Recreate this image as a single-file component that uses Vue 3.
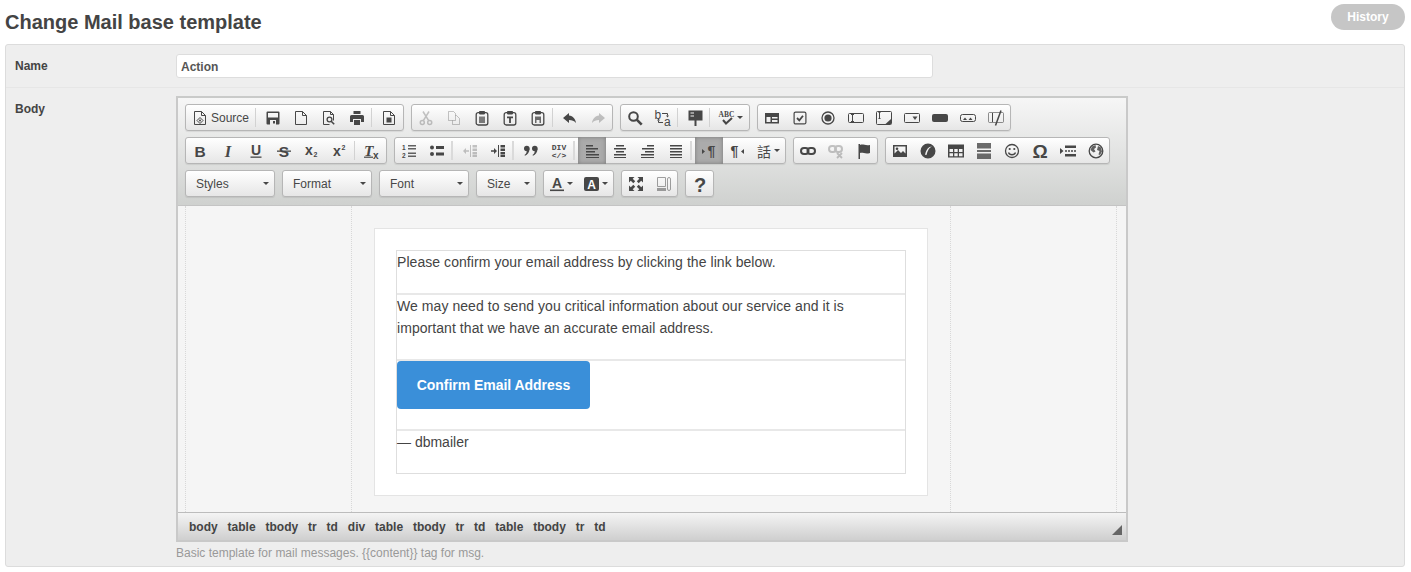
<template>
  <div class="page">
    <div class="top">
      <h1>Change Mail base template</h1>
      <a class="history">History</a>
    </div>

    <div class="panel">
      <div class="row name-row">
        <label>Name</label>
        <input class="name-input" value="Action" />
      </div>

      <div class="row body-row">
        <label>Body</label>
        <div>
          <div class="editor">
            <div class="toolbar">
              <div v-for="(row, r) in toolbar" :key="r" class="tb-row">
                <div v-for="(group, g) in row" :key="g" :class="group.combo ? 'combo' : 'group'" :style="group.combo ? { width: group.combo + 'px' } : null">
                  <template v-if="group.combo">
                    <span>{{ group.label }}</span>
                    <i class="caret"></i>
                  </template>
                  <template v-else v-for="(b, k) in group" :key="k">
                    <span v-if="b.sep" class="sep" :class="{ wide: b.wide }"></span>
                    <span v-else class="btn" :class="{ on: b.on, off: b.off, half: b.half }" :style="b.w ? { width: b.w + 'px' } : null">
                      <svg class="ico" viewBox="0 0 16 16" width="16" height="16" v-html="icons[b.i]"></svg>
                      <span v-if="b.text" class="btn-text">{{ b.text }}</span>
                      <i v-if="b.caret" class="caret small"></i>
                    </span>
                  </template>
                </div>
              </div>
            </div>

            <div class="content">
              <div class="side left"></div>
              <div class="mid">
                <div class="card">
                  <div class="mail">
                    <div class="cell c1">Please confirm your email address by clicking the link below.</div>
                    <div class="cell c2">We may need to send you critical information about our service and it is important that we have an accurate email address.</div>
                    <div class="cell c3"><a class="confirm">Confirm Email Address</a></div>
                    <div class="cell c4">— dbmailer</div>
                  </div>
                </div>
              </div>
              <div class="side right"></div>
            </div>

            <div class="status">
              <span v-for="(p, i) in path" :key="i">{{ p }}</span>
              <i class="resizer"></i>
            </div>
          </div>
          <p class="hint" v-pre>Basic template for mail messages. {{content}} tag for msg.</p>
        </div>
      </div>
    </div>
  </div>
</template>

<script setup>
const path = ['body', 'table', 'tbody', 'tr', 'td', 'div', 'table', 'tbody', 'tr', 'td', 'table', 'tbody', 'tr', 'td']

const sep = { sep: true }
const wsep = { sep: true, wide: true }

const toolbar = [
  [
    [{ i: 'source', text: 'Source', w: 69 }, sep, { i: 'save' }, { i: 'page' }, { i: 'preview' }, { i: 'print' }, sep, { i: 'templates' }],
    [{ i: 'cut', off: true }, { i: 'copy', off: true }, { i: 'paste' }, { i: 'pasteText' }, { i: 'pasteWord' }, sep, { i: 'undo' }, { i: 'redo', off: true }],
    [{ i: 'find' }, { i: 'replace' }, sep, { i: 'blocks' }, sep, { i: 'spell', w: 36, caret: true }],
    [{ i: 'form' }, { i: 'checkbox' }, { i: 'radio' }, { i: 'textfield' }, { i: 'textarea' }, { i: 'select' }, { i: 'button' }, { i: 'imagebutton' }, { i: 'hidden' }]
  ],
  [
    [{ i: 'bold' }, { i: 'italic' }, { i: 'underline' }, { i: 'strike' }, { i: 'sub' }, { i: 'sup' }, sep, { i: 'clear' }],
    [{ i: 'ol' }, { i: 'ul' }, wsep, { i: 'outdent', off: true }, { i: 'indent' }, wsep, { i: 'quote' }, { i: 'div' }, wsep,
      { i: 'left', on: true }, { i: 'center' }, { i: 'right' }, { i: 'justify' }, wsep, { i: 'ltr', on: true }, { i: 'rtl' }, { i: 'lang', w: 34, caret: true }],
    [{ i: 'link' }, { i: 'unlink', off: true }, { i: 'flag', w: 27 }],
    [{ i: 'image' }, { i: 'flash' }, { i: 'table' }, { i: 'hr' }, { i: 'smiley' }, { i: 'omega' }, { i: 'pagebreak' }, { i: 'globe', w: 27 }]
  ],
  [
    { combo: 90, label: 'Styles' },
    { combo: 90, label: 'Format' },
    { combo: 90, label: 'Font' },
    { combo: 60, label: 'Size' },
    [{ i: 'textcolor', w: 34, caret: true }, { i: 'bgcolor', w: 35, caret: true }],
    [{ i: 'maximize' }, { i: 'showblocks', half: true, w: 27 }],
    [{ i: 'help', w: 27 }]
  ]
]

const line = 'fill="none" stroke="currentColor"'
const doc = `<path ${line} d="M2.500 1.500h7l4 4v9h-11zM9.500 1.500v4h4"/>`
const clip = `<rect ${line} stroke-width="1.300" x="2.200" y="2.700" width="11.600" height="12.300" rx="2"/><rect x="5" y="1" width="6" height="3.400" rx=".8"/>`
const sans = 'font-family="Liberation Sans, sans-serif"'

const icons = {
  source: `${doc}<path ${line} d="M8 7.500l3 3-3 3-3-3z"/><circle cx="8" cy="10.500" r="1"/>`,
  save: `<path fill-rule="evenodd" d="M1.500 2.500a1 1 0 0 1 1-1h11a1 1 0 0 1 1 1v11a1 1 0 0 1-1 1h-11a1 1 0 0 1-1-1zM3 3v4.500h10V3zM5 10v4.500h6V10z"/><rect x="8" y="11" width="2" height="2.500"/>`,
  page: doc,
  preview: `<path ${line} d="M2.500 1.500h7l3 3v6M9.500 1.500v3h3M2.500 1.500v13h6"/><circle ${line} stroke-width="1.300" cx="8.500" cy="9.500" r="2.400"/><path ${line} stroke-width="1.600" d="M10.200 11.200l3 3"/>`,
  print: `<path d="M4.500 1h7v3h-7zM2.500 5h11A1.500 1.500 0 0 1 15 6.500V12h-3V9H4v3H1V6.500A1.500 1.500 0 0 1 2.500 5z"/><path d="M5 10h6v5H5z"/>`,
  templates: `${doc}<rect x="5.500" y="7.500" width="5" height="5"/>`,
  cut: `<circle ${line} stroke-width="1.500" cx="4.300" cy="12.500" r="2"/><circle ${line} stroke-width="1.500" cx="11.700" cy="12.500" r="2"/><path ${line} stroke-width="1.500" d="M5.300 10.700L11 1.500M10.700 10.700L5 1.500"/>`,
  copy: `<path ${line} d="M2.500 1.500h5l2 2v7h-7zM9.500 5.500h1l3 3v6h-7v-4"/>`,
  paste: `${clip}<rect x="5" y="6.500" width="6" height="6.500" opacity=".7"/>`,
  pasteText: `${clip}<path d="M5 6.500h6v1.800H8.900V13H7.100V8.300H5z"/>`,
  pasteWord: `${clip}<path fill-rule="evenodd" d="M5 6.500h6v6.500H5zM6.500 10v3h3v-3z" opacity=".8"/>`,
  undo: `<path d="M7 3 1 8l6 5v-3c3 0 5 .7 7 3-.5-4-3-7-7-7.500z"/>`,
  redo: `<path d="M9 3l6 5-6 5v-3c-3 0-5 .7-7 3 .5-4 3-7 7-7.500z"/>`,
  find: `<circle ${line} stroke-width="2" cx="6.500" cy="6.500" r="4.300"/><path ${line} stroke-width="2.600" d="M9.700 9.700l5 5"/>`,
  replace: `<text x="-.5" y="9" font-size="12" ${sans}>b</text><text x="9" y="15.500" font-size="12" ${sans}>a</text><path ${line} d="M7 3.500h5.500v2M8 12.500H3.500v-2"/><path d="M11 5.500h3l-1.500 2zM2 10.500h3l-1.500-2z"/>`,
  blocks: `<path fill-rule="evenodd" d="M1.500 .5h14v10H9.500V16H7.500v-5.500h-6zM3.500 2.500v1h3.500v-1zM3.500 5.500v1h3.500v-1z"/>`,
  spell: `<text x="-.5" y="7" font-size="7.500" font-weight="bold" font-family="Liberation Serif, serif">ABC</text><path ${line} stroke-width="2" d="M4 10l3 3.500L13 8"/>`,
  form: `<path fill-rule="evenodd" d="M1 3h14v10.500H1zM2.500 7v5h4V7zM8 7v1.500h5.500V7zM8 10v2h5.500v-2z"/>`,
  checkbox: `<rect ${line} stroke-width="1.200" x="2.100" y="2.100" width="11.800" height="11.800" rx="1.500"/><path ${line} stroke-width="1.800" d="M5 8l2.300 2.300L11 5.700"/>`,
  radio: `<circle ${line} stroke-width="1.300" cx="8" cy="8" r="6"/><circle cx="8" cy="8" r="3.600"/>`,
  textfield: `<rect ${line} x=".5" y="3.500" width="15" height="9" rx="1"/><path ${line} d="M4.500 4v8M3 4.500h3M3 11.500h3"/>`,
  textarea: `<rect ${line} x=".5" y="1.500" width="15" height="13" rx="1"/><path ${line} d="M3.500 2v7M2.500 2.500h2M2.500 8.500h2"/><path d="M15 9v5H9.500z"/>`,
  select: `<rect ${line} x=".5" y="3.500" width="15" height="9" rx="1"/><path d="M8.500 6.500h5L11 10z"/>`,
  button: `<rect x="0" y="4" width="16" height="8" rx="2"/>`,
  imagebutton: `<rect ${line} x=".5" y="4.500" width="15" height="7" rx="2"/><path d="M3 10l2-2.500L7 10zM8.500 10l2-2.500 2 2.500z"/>`,
  hidden: `<rect ${line} opacity=".6" x=".5" y="2.500" width="15" height="10" rx="1"/><path ${line} d="M4.500 3v9"/><path ${line} stroke-width="1.500" d="M13 .5L7.500 15.500"/>`,
  bold: `<text x="8" y="13.500" text-anchor="middle" font-size="15.500" font-weight="bold" ${sans}>B</text>`,
  italic: `<text x="8" y="13.500" text-anchor="middle" font-size="16.500" font-weight="bold" font-style="italic" font-family="Liberation Serif, serif">I</text>`,
  underline: `<text x="8" y="12" text-anchor="middle" font-size="14" font-weight="bold" ${sans}>U</text><rect x="2.500" y="13.500" width="11" height="1.300"/>`,
  strike: `<text x="8" y="13.500" text-anchor="middle" font-size="15.500" font-weight="bold" ${sans}>S</text><rect x="1" y="7.500" width="14" height="1.300"/>`,
  sub: `<text x="1" y="11.500" font-size="14" font-weight="bold" ${sans}>x</text><text x="9.500" y="14" font-size="7" font-weight="bold" ${sans}>2</text>`,
  sup: `<text x="1" y="12.500" font-size="14" font-weight="bold" ${sans}>x</text><text x="9.500" y="6.500" font-size="7" font-weight="bold" ${sans}>2</text>`,
  clear: `<text x="0" y="12.500" font-size="15.500" font-weight="bold" font-style="italic" font-family="Liberation Serif, serif">T</text><rect x="0" y="13.600" width="9" height="1.200"/><text x="9" y="15.500" font-size="10" font-weight="bold" ${sans}>x</text>`,
  ol: `<text x="1" y="7" font-size="6.500" font-weight="bold" ${sans}>1</text><text x="1" y="14.500" font-size="6.500" font-weight="bold" ${sans}>2</text><path opacity=".85" d="M7 2h8v1.500H7zM7 5h8v1.500H7zM7 9.500h8V11H7zM7 12.500h8V14H7z"/>`,
  ul: `<circle cx="3" cy="4.500" r="2"/><circle cx="3" cy="11" r="2"/><path d="M7 3h8v3H7zM7 9.500h8v3H7z"/>`,
  outdent: `<path d="M8 2h1v12H8zM10.500 2H15v2.400h-4.500zM10.500 5.500H15v2.400h-4.500zM10.500 9H15v2.400h-4.500zM10.500 12H15v2h-4.500zM7 7.300H4V5L1 8l3 3V8.700h3z"/>`,
  indent: `<path d="M8 2h1v12H8zM10.500 2H15v2.400h-4.500zM10.500 5.500H15v2.400h-4.500zM10.500 9H15v2.400h-4.500zM10.500 12H15v2h-4.500zM1 7.300h3V5l3 3-3 3V8.700H1z"/>`,
  quote: `<circle cx="3.800" cy="5.500" r="2.800"/><path d="M6.500 5.500c0 4-2 6-4.500 7.300l-.5-.8c1.500-1 2.300-2.500 2.300-4z"/><circle cx="11.800" cy="5.500" r="2.800"/><path d="M14.500 5.500c0 4-2 6-4.500 7.300l-.5-.8c1.500-1 2.300-2.500 2.300-4z"/>`,
  div: `<text x="8" y="7" text-anchor="middle" font-size="8" font-family="Liberation Mono, monospace" font-weight="bold">DIV</text><text x="8" y="14.500" text-anchor="middle" font-size="8" font-family="Liberation Mono, monospace" font-weight="bold">&lt;/&gt;</text>`,
  left: `<path d="M2 2h7v1.500H2zM2 5h12v1.500H2zM2 8h9v1.500H2zM2 11h13v1.500H2zM2 14h13v1H2z"/>`,
  center: `<path d="M4 2h8v1.500H4zM2 5h12v1.500H2zM4 8h8v1.500H4zM2 11h12v1.500H2zM2 14h12v1H2z"/>`,
  right: `<path d="M7 2h7v1.500H7zM2 5h12v1.500H2zM5 8h9v1.500H5zM1 11h13v1.500H1zM1 14h13v1H1z"/>`,
  justify: `<path d="M2 2h12v1.500H2zM2 5h12v1.500H2zM2 8h12v1.500H2zM2 11h12v1.500H2zM2 14h12v1H2z"/>`,
  ltr: `<path d="M1 6l3 2.500L1 11z"/><text x="10.500" y="13" text-anchor="middle" font-size="14" font-weight="bold" ${sans}>¶</text>`,
  rtl: `<path d="M15 6l-3 2.500 3 2.500z"/><text x="5.500" y="13" text-anchor="middle" font-size="14" font-weight="bold" ${sans}>¶</text>`,
  lang: `<text x="8" y="13.500" text-anchor="middle" font-size="14" font-family="Noto Sans CJK TC, sans-serif">話</text>`,
  link: `<rect ${line} stroke-width="2" x="1" y="5" width="7.500" height="6" rx="3"/><rect ${line} stroke-width="2" x="7.500" y="5" width="7.500" height="6" rx="3"/>`,
  unlink: `<rect ${line} stroke-width="2" x="1" y="3" width="7" height="6" rx="3"/><rect ${line} stroke-width="2" x="7" y="3" width="7" height="6" rx="3"/><path ${line} stroke-width="1.800" d="M9 10l5 5M14 10l-5 5"/>`,
  flag: `<path d="M2.500 1H4v15H2.500zM4 2c3-1.500 5 1 10 0v8c-5 1.500-7-1-10 0z"/>`,
  image: `<path fill-rule="evenodd" d="M1 2h14v12H1zM2.500 3.500v7L6 7l3 3 2-2 2.500 2.500v-7z"/><circle cx="5" cy="5.700" r="1.300"/>`,
  flash: `<path fill-rule="evenodd" d="M8 .5a7.500 7.500 0 1 0 0 15 7.500 7.500 0 0 0 0-15zM12 3.500c-2.500 1-4 3-5.500 8.500l-1.500-.3C6.500 6 8.500 3.800 12 3.500z"/>`,
  table: `<path fill-rule="evenodd" d="M0 1.500h16v13H0zM1.500 6v3h3.500V6zM6.300 6v3h3.400V6zM11 6v3h3.500V6zM1.500 10.200v3h3.500v-3zM6.300 10.200v3h3.400v-3zM11 10.200v3h3.500v-3z"/>`,
  hr: `<path opacity=".8" d="M1 0h14v5.500H1zM1 7h14v2H1zM1 10.500h14V16H1z"/>`,
  smiley: `<circle ${line} stroke-width="1.300" cx="8" cy="8" r="6.500"/><circle cx="5.700" cy="6" r="1.100"/><circle cx="10.300" cy="6" r="1.100"/><path ${line} stroke-width="1.300" d="M4.500 9.500c1 3 6 3 7 0"/>`,
  omega: `<text x="8" y="15" text-anchor="middle" font-size="19" font-weight="bold" ${sans}>Ω</text>`,
  pagebreak: `<path d="M0 5l3.500 3L0 11zM5 2.500h11V5H5zM5 7.300h2v1.400H5zM8 7.300h2v1.400H8zM11 7.300h2v1.400h-2zM14 7.300h2v1.400h-2zM5 11h11v2.500H5z"/>`,
  globe: `<circle ${line} stroke-width="1.300" cx="8" cy="8" r="6.800"/><path opacity=".85" d="M4 3.500l3.500-1.500L8 4.500 6 6l1.500 2.500-2 1L2.500 7zM10 3l3 1.500 1 4-2 3.500-1.500-.5 1-3.500L9 7z"/>`,
  textcolor: `<text x="8" y="11.500" text-anchor="middle" font-size="14" font-weight="bold" ${sans}>A</text><rect x="1" y="13.500" width="14" height="1.600"/>`,
  bgcolor: `<rect x="0" y="1" width="15" height="14" rx="2"/><text x="7.500" y="12.500" text-anchor="middle" font-size="12" font-weight="bold" fill="#fff" ${sans}>A</text>`,
  maximize: `<path d="M1 1h5.500L4.700 2.800l2.500 2.500-1.900 1.900-2.500-2.500L1 6.500zM15 1v5.500l-1.800-1.800-2.500 2.500-1.900-1.900 2.500-2.500L9.500 1zM1 15V9.500l1.800 1.800 2.500-2.500 1.900 1.900-2.500 2.500L6.500 15zM15 15H9.500l1.800-1.800-2.500-2.500 1.900-1.900 2.500 2.500L15 9.500z"/>`,
  showblocks: `<path ${line} d="M1.500 1.500h8v9h-8z"/><path d="M1 12h9v3H1z"/><rect ${line} x="11.500" y="1.500" width="3" height="13" rx="1.500"/>`,
  help: `<text x="8" y="15.500" text-anchor="middle" font-size="20" font-weight="bold" ${sans}>?</text>`
}
</script>

<style scoped>
.page {
  font-family: "Liberation Sans", Arial, sans-serif;
  color: #444;
  height: 572px;
  overflow: hidden;
}

.top {
  display: flex;
  justify-content: space-between;
  align-items: flex-start;
  height: 44px;
  padding: 4px 6px 0 5px;
  box-sizing: border-box;
}

h1 {
  margin: 7px 0 0;
  font-size: 20px;
  line-height: 23px;
  font-weight: bold;
  color: #444;
}

.history {
  width: 74px;
  height: 26px;
  line-height: 27px;
  border-radius: 13px;
  background: #c6c6c6;
  color: #fff;
  font-size: 12px;
  font-weight: bold;
  text-align: center;
}

.panel {
  margin: 0 6px 0 5px;
  height: 523px;
  box-sizing: border-box;
  background: #eee;
  border: 1px solid #dcdcdc;
  border-radius: 3px;
}

.row {
  display: grid;
  grid-template-columns: 170px 1fr;
}

.row label {
  padding-left: 9px;
  font-size: 12px;
  font-weight: bold;
  line-height: 14px;
  color: #444;
}

.name-row {
  height: 43px;
  box-sizing: border-box;
  padding-top: 9px;
  border-bottom: 1px solid #e6e6e6;
}

.name-row label {
  padding-top: 5px;
}

.name-input {
  width: 757px;
  height: 24px;
  box-sizing: border-box;
  padding: 1px 4px 0;
  border: 1px solid #ddd;
  border-radius: 3px;
  background: #fff;
  font: bold 12px "Liberation Sans", Arial, sans-serif;
  color: #555;
  outline: none;
}

.body-row {
  padding-top: 8px;
}

.body-row label {
  padding-top: 6px;
}

.editor {
  width: 952px;
  box-sizing: border-box;
  border: 2px solid #c9c9c9;
  border-top-color: #c9cac9;
}

.toolbar {
  height: 108px;
  box-sizing: border-box;
  padding: 6px 0 0 7px;
  display: flex;
  flex-direction: column;
  gap: 6px;
  background: linear-gradient(#f6f6f6, #cfd1cf);
  border-bottom: 1px solid #c4c4c4;
}

.tb-row {
  display: flex;
  gap: 7px;
  height: 27px;
}

.group,
.combo {
  display: flex;
  align-items: center;
  box-sizing: border-box;
  height: 27px;
  border: 1px solid #b6b6b6;
  border-radius: 3px;
  background: linear-gradient(#fff, #e6e6e6);
  box-shadow: 0 1px 1px rgba(0, 0, 0, 0.08);
}

.combo {
  position: relative;
  padding-left: 10px;
  font-size: 12px;
  color: #474747;
}

.combo .caret {
  position: absolute;
  right: 5px;
  top: 11px;
}

.btn {
  display: flex;
  align-items: center;
  justify-content: center;
  flex: none;
  width: 28px;
  height: 25px;
  color: #474747;
}

.btn.on {
  background: #ababab;
  box-shadow: inset 0 0 4px #777;
  margin: -1px 0;
  height: 27px;
}

.btn.off .ico {
  opacity: 0.3;
}

.btn.half .ico {
  opacity: 0.5;
}

.btn-text {
  margin-left: 3px;
  font-size: 12px;
}

.ico {
  flex: none;
  fill: currentColor;
  overflow: visible;
}

.sep {
  flex: none;
  width: 4px;
  height: 19px;
  box-sizing: border-box;
  border-left: 1px solid #d2d2d2;
}

.sep.wide {
  width: 5px;
  border-left-width: 2px;
  border-left-color: #dadada;
}

.caret {
  display: block;
  width: 0;
  height: 0;
  border-left: 3px solid transparent;
  border-right: 3px solid transparent;
  border-top: 3px solid #474747;
}

.caret.small {
  margin-left: 2px;
}

.content {
  display: flex;
  height: 306px;
  padding-left: 7px;
  background: #f5f5f5;
}

.side {
  box-sizing: border-box;
  width: 167px;
  border-left: 1px dotted #d8d8d8;
  border-right: 1px dotted #d8d8d8;
}

.side.right {
  margin-right: 9px;
}

.mid {
  flex: 1;
  padding: 22px 22px 0;
}

.card {
  height: 268px;
  box-sizing: border-box;
  padding: 21px;
  background: #fff;
  border: 1px solid #e4e4e4;
}

.mail {
  height: 224px;
  box-sizing: border-box;
  border: 1px solid #dedede;
  font-size: 14px;
  line-height: 22px;
  letter-spacing: 0.06px;
  color: #444;
}

.cell {
  box-sizing: border-box;
  border-bottom: 2px solid #e8e8e8;
}

.cell:last-child {
  border-bottom: 0;
}

.c1 {
  height: 44px;
}

.c2 {
  height: 66px;
}

.c3 {
  height: 70px;
}

.c4 {
  height: 42px;
  letter-spacing: 0;
}

.confirm {
  display: block;
  width: 193px;
  height: 48px;
  line-height: 48px;
  border-radius: 4px;
  background: #3a8fd9;
  color: #fff;
  font-weight: bold;
  letter-spacing: -0.04px;
  text-align: center;
}

.status {
  position: relative;
  display: flex;
  gap: 9.9px;
  align-items: center;
  height: 28px;
  box-sizing: border-box;
  padding-left: 11px;
  border-top: 1px solid #bcbcbc;
  background: linear-gradient(#f4f4f4, #cfcfcf);
  font-size: 12px;
  font-weight: bold;
  color: #444;
}

.resizer {
  position: absolute;
  right: 4px;
  bottom: 5px;
  width: 0;
  height: 0;
  border-left: 10px solid transparent;
  border-bottom: 10px solid #666;
}

.hint {
  margin: 4px 0 0;
  font-size: 12px;
  line-height: 14px;
  color: #999;
}
</style>

<style>
html, body {
  margin: 0;
  background: #fff;
}
</style>
